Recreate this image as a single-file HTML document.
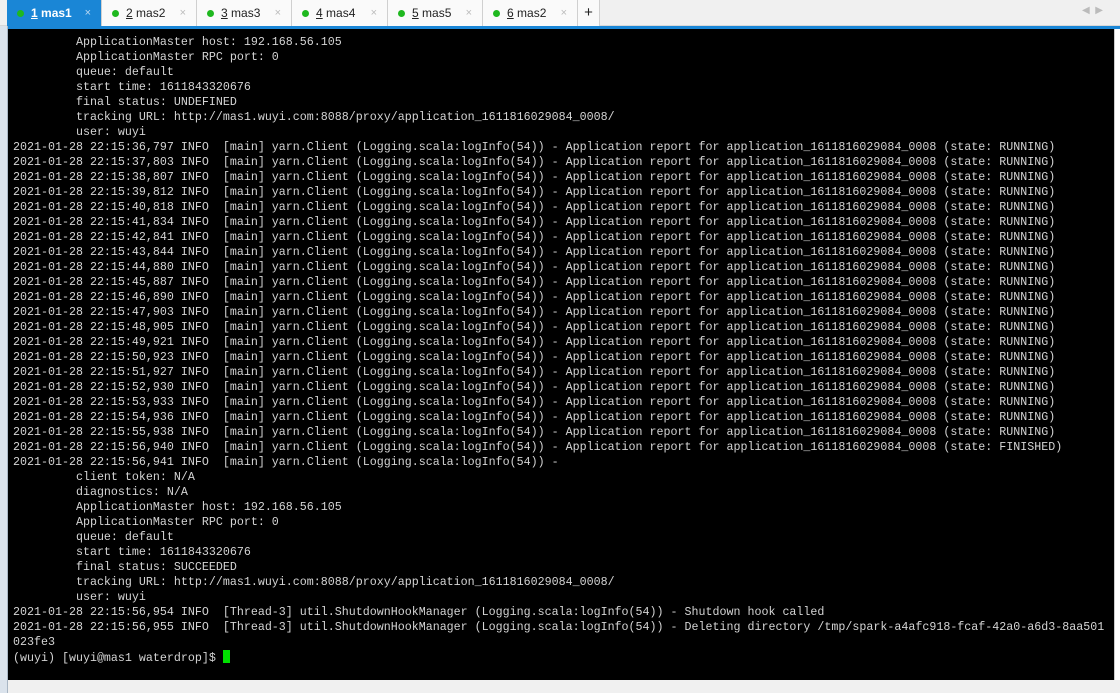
<!DOCTYPE html>
<html><head><meta charset="utf-8"><style>
*{margin:0;padding:0;box-sizing:border-box}
body{width:1120px;height:693px;overflow:hidden;background:#fff;position:relative;font-family:"Liberation Sans",sans-serif}
#left{position:absolute;left:0;top:0;width:8px;height:693px;background:#dbe3ec;border-right:1px solid #a9b6c4}
#tabs{position:absolute;left:0;top:0;width:1120px;height:26px;background:#f0f0f0;border-bottom:1px solid #d8d8d8}
.tab{position:absolute;top:0;height:26px;background:#fafafa;border-right:1px solid #d0d0d0;font-size:12px;color:#222;line-height:26px}
.tab .d{position:absolute;left:10px;top:10px;width:7px;height:7px;border-radius:50%;background:#1fb81f}
.tab .t{position:absolute;left:24px}
.tab .x{position:absolute;right:10px;color:#bbb;font-size:11px}
.tab.a{background:#1a86d6;color:#fff;font-weight:bold}
.tab.a .x{color:#bcd9f2;font-weight:normal}
#bar{position:absolute;left:8px;top:26px;width:1112px;height:3px;background:#1a86d6}
#term{position:absolute;left:8px;top:29px;width:1106px;height:651px;background:#000}
pre{position:absolute;left:13px;top:35px;font-family:"Liberation Mono",monospace;font-size:11.66px;line-height:15px;color:#d4d4d4;letter-spacing:0}
.cur{display:inline-block;width:7px;height:13px;background:#00e000;vertical-align:-2px}
#bot{position:absolute;left:8px;top:680px;width:1112px;height:13px;background:#f0f0f0}
#rt{position:absolute;left:1114px;top:29px;width:6px;height:651px;background:#fff;border-left:1px solid #ccc;z-index:2}
</style></head><body>
<div id="left"></div>
<div id="tabs">
<div class="tab a" style="left:7px;width:95px"><span class="d"></span><span class="t"><u>1</u> mas1</span><span class="x">×</span></div>
<div class="tab" style="left:102px;width:95px"><span class="d"></span><span class="t"><u>2</u> mas2</span><span class="x">×</span></div>
<div class="tab" style="left:197px;width:95px"><span class="d"></span><span class="t"><u>3</u> mas3</span><span class="x">×</span></div>
<div class="tab" style="left:292px;width:96px"><span class="d"></span><span class="t"><u>4</u> mas4</span><span class="x">×</span></div>
<div class="tab" style="left:388px;width:95px"><span class="d"></span><span class="t"><u>5</u> mas5</span><span class="x">×</span></div>
<div class="tab" style="left:483px;width:95px"><span class="d"></span><span class="t"><u>6</u> mas2</span><span class="x">×</span></div>
<div class="tab" style="left:578px;width:22px;text-align:center;font-size:15px">+</div>
<div style="position:absolute;left:1082px;top:5px;color:#bbb;font-size:10px">◀ &nbsp;▶</div>
</div>
<div id="bar"></div>
<div id="term"></div>
<div id="bot"></div>
<pre>         ApplicationMaster host: 192.168.56.105
         ApplicationMaster RPC port: 0
         queue: default
         start time: 1611843320676
         final status: UNDEFINED
         tracking URL: http://mas1.wuyi.com:8088/proxy/application_1611816029084_0008/
         user: wuyi
2021-01-28 22:15:36,797 INFO  [main] yarn.Client (Logging.scala:logInfo(54)) - Application report for application_1611816029084_0008 (state: RUNNING)
2021-01-28 22:15:37,803 INFO  [main] yarn.Client (Logging.scala:logInfo(54)) - Application report for application_1611816029084_0008 (state: RUNNING)
2021-01-28 22:15:38,807 INFO  [main] yarn.Client (Logging.scala:logInfo(54)) - Application report for application_1611816029084_0008 (state: RUNNING)
2021-01-28 22:15:39,812 INFO  [main] yarn.Client (Logging.scala:logInfo(54)) - Application report for application_1611816029084_0008 (state: RUNNING)
2021-01-28 22:15:40,818 INFO  [main] yarn.Client (Logging.scala:logInfo(54)) - Application report for application_1611816029084_0008 (state: RUNNING)
2021-01-28 22:15:41,834 INFO  [main] yarn.Client (Logging.scala:logInfo(54)) - Application report for application_1611816029084_0008 (state: RUNNING)
2021-01-28 22:15:42,841 INFO  [main] yarn.Client (Logging.scala:logInfo(54)) - Application report for application_1611816029084_0008 (state: RUNNING)
2021-01-28 22:15:43,844 INFO  [main] yarn.Client (Logging.scala:logInfo(54)) - Application report for application_1611816029084_0008 (state: RUNNING)
2021-01-28 22:15:44,880 INFO  [main] yarn.Client (Logging.scala:logInfo(54)) - Application report for application_1611816029084_0008 (state: RUNNING)
2021-01-28 22:15:45,887 INFO  [main] yarn.Client (Logging.scala:logInfo(54)) - Application report for application_1611816029084_0008 (state: RUNNING)
2021-01-28 22:15:46,890 INFO  [main] yarn.Client (Logging.scala:logInfo(54)) - Application report for application_1611816029084_0008 (state: RUNNING)
2021-01-28 22:15:47,903 INFO  [main] yarn.Client (Logging.scala:logInfo(54)) - Application report for application_1611816029084_0008 (state: RUNNING)
2021-01-28 22:15:48,905 INFO  [main] yarn.Client (Logging.scala:logInfo(54)) - Application report for application_1611816029084_0008 (state: RUNNING)
2021-01-28 22:15:49,921 INFO  [main] yarn.Client (Logging.scala:logInfo(54)) - Application report for application_1611816029084_0008 (state: RUNNING)
2021-01-28 22:15:50,923 INFO  [main] yarn.Client (Logging.scala:logInfo(54)) - Application report for application_1611816029084_0008 (state: RUNNING)
2021-01-28 22:15:51,927 INFO  [main] yarn.Client (Logging.scala:logInfo(54)) - Application report for application_1611816029084_0008 (state: RUNNING)
2021-01-28 22:15:52,930 INFO  [main] yarn.Client (Logging.scala:logInfo(54)) - Application report for application_1611816029084_0008 (state: RUNNING)
2021-01-28 22:15:53,933 INFO  [main] yarn.Client (Logging.scala:logInfo(54)) - Application report for application_1611816029084_0008 (state: RUNNING)
2021-01-28 22:15:54,936 INFO  [main] yarn.Client (Logging.scala:logInfo(54)) - Application report for application_1611816029084_0008 (state: RUNNING)
2021-01-28 22:15:55,938 INFO  [main] yarn.Client (Logging.scala:logInfo(54)) - Application report for application_1611816029084_0008 (state: RUNNING)
2021-01-28 22:15:56,940 INFO  [main] yarn.Client (Logging.scala:logInfo(54)) - Application report for application_1611816029084_0008 (state: FINISHED)
2021-01-28 22:15:56,941 INFO  [main] yarn.Client (Logging.scala:logInfo(54)) - 
         client token: N/A
         diagnostics: N/A
         ApplicationMaster host: 192.168.56.105
         ApplicationMaster RPC port: 0
         queue: default
         start time: 1611843320676
         final status: SUCCEEDED
         tracking URL: http://mas1.wuyi.com:8088/proxy/application_1611816029084_0008/
         user: wuyi
2021-01-28 22:15:56,954 INFO  [Thread-3] util.ShutdownHookManager (Logging.scala:logInfo(54)) - Shutdown hook called
2021-01-28 22:15:56,955 INFO  [Thread-3] util.ShutdownHookManager (Logging.scala:logInfo(54)) - Deleting directory /tmp/spark-a4afc918-fcaf-42a0-a6d3-8aa501
023fe3
(wuyi) [wuyi@mas1 waterdrop]$ <span class="cur"></span></pre>
<div id="rt"></div>
</body></html>
